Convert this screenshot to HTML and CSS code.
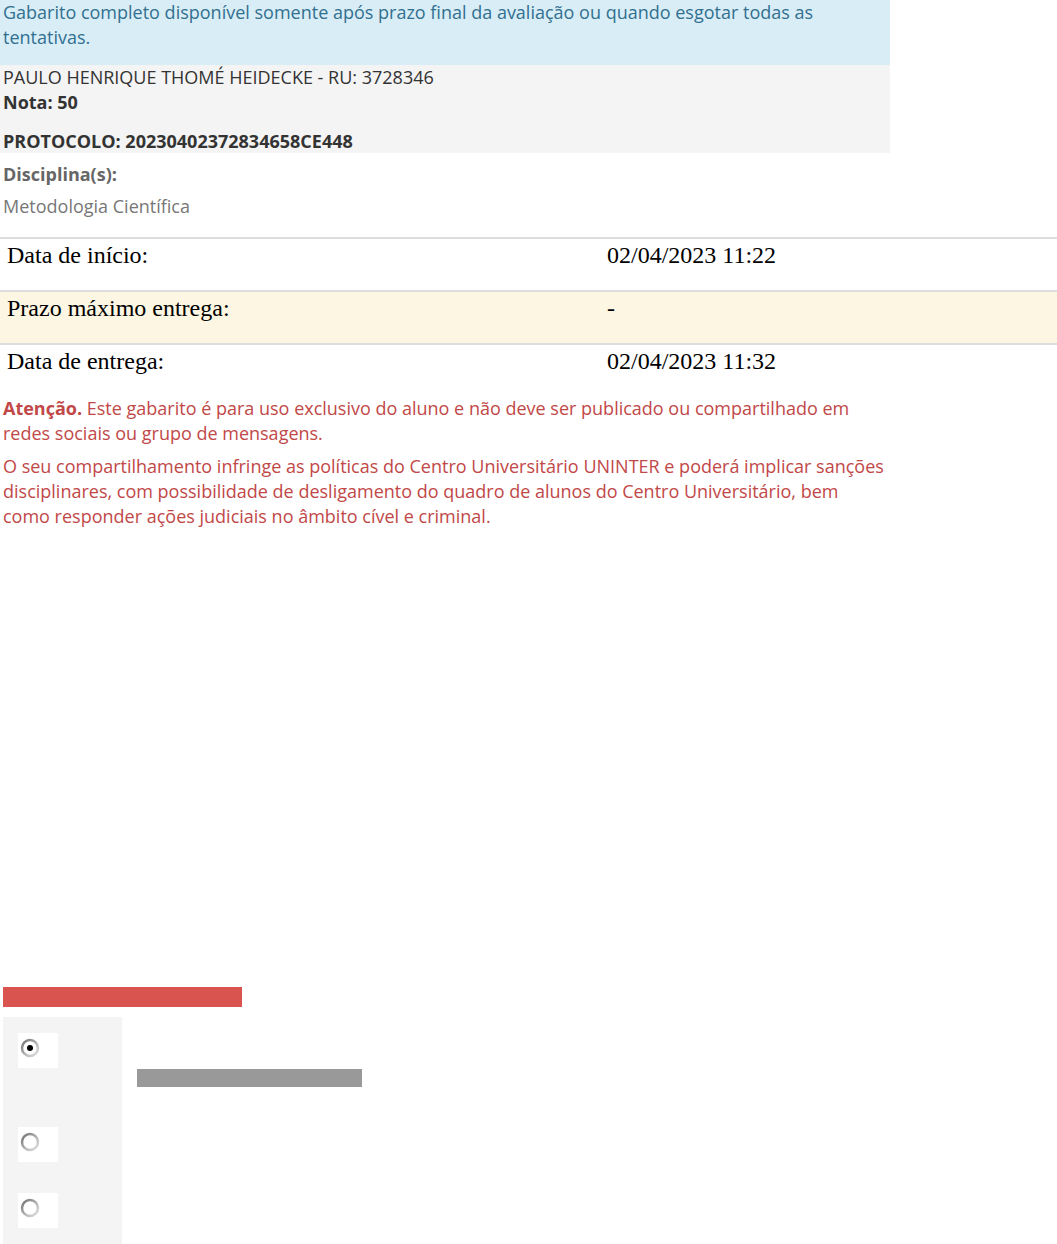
FILE: index.html
```html
<!DOCTYPE html>
<html lang="pt-br">
<head>
    <meta charset="utf-8" />
    <title>Gabarito</title>
    <link rel="stylesheet" href="styles.css">
</head>
<body>
    <div id="container">
        <div class="alert-info">Gabarito completo disponível somente após prazo final da avaliação ou quando esgotar todas as tentativas.</div>
        <div class="aluno">
            <div>PAULO HENRIQUE THOMÉ HEIDECKE - RU: 3728346</div>
            <div class="nota">Nota: 50</div>
            <div class="protocolo">PROTOCOLO: 20230402372834658CE448</div>
        </div>
        <div class="disciplina">
            <div class="label">Disciplina(s):</div>
            <div class="nome">Metodologia Científica</div>
        </div>
    </div>
    <table class="datas">
        <tr>
            <td>Data de início:</td>
            <td>02/04/2023 11:22</td>
        </tr>
        <tr class="prazo">
            <td>Prazo máximo entrega:</td>
            <td>-</td>
        </tr>
        <tr>
            <td>Data de entrega:</td>
            <td>02/04/2023 11:32</td>
        </tr>
    </table>
    <div class="aviso">
        <p><b>Atenção.</b> Este gabarito é para uso exclusivo do aluno e não deve ser publicado ou compartilhado em redes sociais ou grupo de mensagens.</p>
        <p>O seu compartilhamento infringe as políticas do Centro Universitário UNINTER e poderá implicar sanções disciplinares, com possibilidade de desligamento do quadro de alunos do Centro Universitário, bem como responder ações judiciais no âmbito cível e criminal.</p>
    </div>
    <div class="questao">
        <div class="barra"></div>
        <div class="alternativas">
            <div class="opcoes">
                <span class="radio"><svg width="22" height="22" viewBox="0 0 22 22"><defs><linearGradient id="anel" x1="0" y1="0" x2="1" y2="1"><stop offset="0" stop-color="#6f6f6f"/><stop offset="0.55" stop-color="#b5b5b5"/><stop offset="1" stop-color="#e2e2e2"/></linearGradient></defs><circle cx="11" cy="11" r="8" fill="#fff" stroke="url(#anel)" stroke-width="2.5"/><circle cx="11" cy="11" r="3" fill="#000"/></svg></span>
                <span class="radio r2"><svg width="22" height="22" viewBox="0 0 22 22"><circle cx="11" cy="11" r="8" fill="#fff" stroke="url(#anel)" stroke-width="2.5"/></svg></span>
                <span class="radio r3"><svg width="22" height="22" viewBox="0 0 22 22"><circle cx="11" cy="11" r="8" fill="#fff" stroke="url(#anel)" stroke-width="2.5"/></svg></span>
            </div>
            <div class="texto">
                <div class="linha"></div>
            </div>
        </div>
    </div>
</body>
</html>
```
FILE: styles.css
```css
html, body {
    margin: 0;
    padding: 0;
    background: #fff;
}
body {
    font-family: "Open Sans", "DejaVu Sans", sans-serif;
    font-size: 18px;
    line-height: 25px;
    color: #333;
}
#container {
    width: 890px;
}
.alert-info {
    background: #d9edf7;
    color: #31708f;
    padding: 0 3px 15px 3px;
    height: 50px;
}
.aluno {
    background: #f4f4f4;
    padding: 0 3px;
    height: 88px;
}
.nota {
    font-weight: bold;
}
.protocolo {
    font-weight: bold;
    margin-top: 14px;
}
.disciplina {
    padding: 9px 3px 0 3px;
    height: 75px;
}
.disciplina .label {
    font-weight: bold;
    color: #666;
}
.disciplina .nome {
    color: #777;
    margin-top: 7px;
}
.datas {
    width: 100%;
    border-collapse: collapse;
    font-family: "Liberation Serif", "Times New Roman", serif;
    font-size: 24px;
    color: #000;
}
.datas td {
    border-top: 2px solid #ddd;
    padding: 2px 7px 0 7px;
    height: 49px;
    vertical-align: top;
    line-height: 28px;
}
.datas td:first-child {
    width: 586px;
}
.datas tr.prazo td {
    background: #fcf6e3;
}
.aviso {
    width: 890px;
    color: #c14848;
    padding: 0 3px;
    box-sizing: border-box;
}
.aviso p {
    margin: 0 0 8px 0;
}
.questao {
    margin-top: 458px;
    padding-left: 3px;
}
.barra {
    width: 239px;
    height: 20px;
    background: #d9534f;
}
.alternativas {
    display: flex;
    margin-top: 10px;
}
.opcoes {
    width: 119px;
    height: 227px;
    background: #f4f4f4;
    display: flex;
    flex-direction: column;
    padding: 16px 0 0 15px;
    box-sizing: border-box;
}
.radio {
    display: block;
    width: 40px;
    height: 35px;
    background: #fff;
    padding: 4px 0 0 1px;
    box-sizing: border-box;
}
.radio svg {
    display: block;
}
.r2 {
    margin-top: 59px;
}
.r3 {
    margin-top: 31px;
}
.texto {
    padding: 52px 0 0 15px;
}
.linha {
    width: 225px;
    height: 18px;
    background: #999;
}
```
